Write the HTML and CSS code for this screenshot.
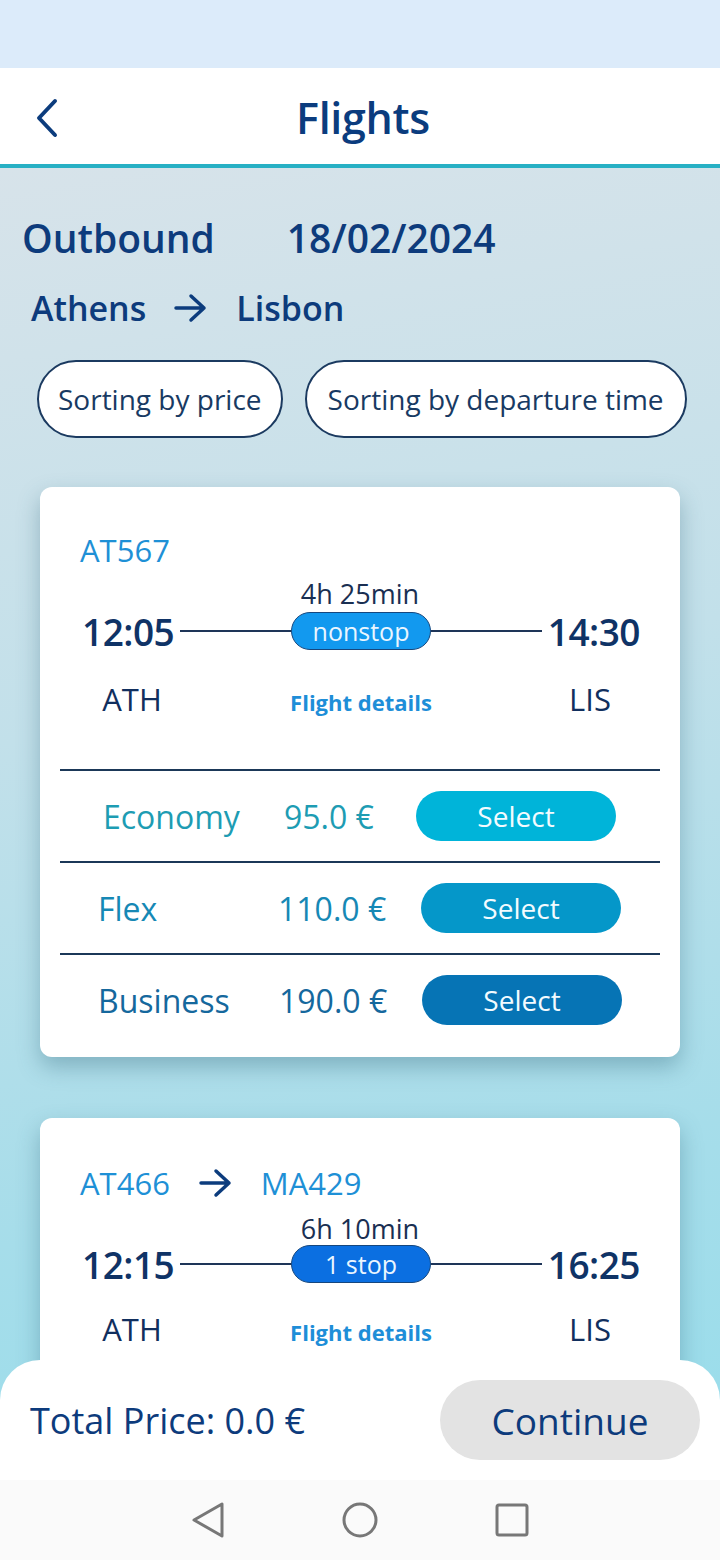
FILE: index.html
```html
<!DOCTYPE html>
<html lang="en">
<head>
<meta charset="utf-8">
<title>Flights</title>
<link rel="stylesheet" href="styles.css">
</head>
<body>
<div class="phone">
  <div class="status"></div>
  <header class="header">
    <svg class="back" width="24" height="40" viewBox="0 0 24 40"><path d="M20 3 L4 20 L20 37" fill="none" stroke="#0C3C7D" stroke-width="4" stroke-linecap="round" stroke-linejoin="round"/></svg>
    <h1 class="title">Flights</h1>
  </header>
  <main class="main">
    <div class="content">
      <div class="trip-row">
        <span class="trip-label">Outbound</span>
        <span class="trip-date">18/02/2024</span>
      </div>
      <div class="route-row">
        <span>Athens</span>
        <svg class="arrow" width="34" height="30" viewBox="0 0 34 30"><path d="M2 15 H30 M17 3 L30 15 L17 27" fill="none" stroke="#0C3C7D" stroke-width="3.5" stroke-linecap="round" stroke-linejoin="round"/></svg>
        <span>Lisbon</span>
      </div>
      <div class="sort-row">
        <button class="sort-btn">Sorting by price</button>
        <button class="sort-btn">Sorting by departure time</button>
      </div>

      <section class="card">
        <div class="code-row"><span class="code">AT567</span></div>
        <div class="duration">4h 25min</div>
        <div class="time-row">
          <span class="time">12:05</span>
          <span class="line"></span>
          <span class="badge nonstop">nonstop</span>
          <span class="line"></span>
          <span class="time">14:30</span>
        </div>
        <div class="airport-row">
          <span class="airport">ATH</span>
          <span class="details">Flight details</span>
          <span class="airport">LIS</span>
        </div>
        <div class="fares">
          <div class="fare eco">
            <span class="fare-name">Economy</span>
            <span class="fare-price">95.0 €</span>
            <button class="select">Select</button>
          </div>
          <div class="fare flex">
            <span class="fare-name">Flex</span>
            <span class="fare-price">110.0 €</span>
            <button class="select">Select</button>
          </div>
          <div class="fare biz">
            <span class="fare-name">Business</span>
            <span class="fare-price">190.0 €</span>
            <button class="select">Select</button>
          </div>
        </div>
      </section>

      <section class="card card2">
        <div class="code-row codes2">
          <span class="code">AT466</span>
          <svg class="arrow small" width="34" height="30" viewBox="0 0 34 30"><path d="M2 15 H30 M17 3 L30 15 L17 27" fill="none" stroke="#0C3C7D" stroke-width="3.5" stroke-linecap="round" stroke-linejoin="round"/></svg>
          <span class="code">MA429</span>
        </div>
        <div class="duration">6h 10min</div>
        <div class="time-row">
          <span class="time">12:15</span>
          <span class="line"></span>
          <span class="badge stop">1 stop</span>
          <span class="line"></span>
          <span class="time">16:25</span>
        </div>
        <div class="airport-row">
          <span class="airport">ATH</span>
          <span class="details">Flight details</span>
          <span class="airport">LIS</span>
        </div>
      </section>
    </div>

    <div class="sheet">
      <span class="total">Total Price: 0.0 €</span>
      <button class="continue">Continue</button>
    </div>
  </main>
  <nav class="navbar">
    <svg width="40" height="40" viewBox="0 0 40 40"><path d="M34 4 L34 36 L6 20 Z" fill="none" stroke="#777" stroke-width="3" stroke-linejoin="round"/></svg>
    <svg width="40" height="40" viewBox="0 0 40 40"><circle cx="20" cy="20" r="16" fill="none" stroke="#777" stroke-width="3"/></svg>
    <svg width="40" height="40" viewBox="0 0 40 40"><rect x="5" y="5" width="30" height="30" rx="2" fill="none" stroke="#777" stroke-width="3"/></svg>
  </nav>
</div>
</body>
</html>
```
FILE: styles.css
```css
* { box-sizing: border-box; }
html, body { margin: 0; padding: 0; }
body {
  font-family: "Open Sans", "Noto Sans", sans-serif;
  color: #0D3B7C;
}
button { font-family: inherit; cursor: pointer; }

.phone {
  width: 720px;
  height: 1560px;
  display: flex;
  flex-direction: column;
  overflow: hidden;
}

.status {
  height: 68px;
  flex: none;
  background: #DCEBFA;
}

.header {
  height: 100px;
  flex: none;
  background: #fff;
  border-bottom: 4px solid #27B0C4;
  display: flex;
  align-items: center;
  justify-content: center;
  position: relative;
}
.back {
  position: absolute;
  left: 35px;
  top: 30px;
}
.title {
  margin: 0;
  font-size: 43px;
  font-weight: 600;
  color: #0B3C7E;
  letter-spacing: -0.3px;
  padding-top: 2px;
  margin-left: 6px;
}

.main {
  flex: 1;
  position: relative;
  overflow: hidden;
  background: linear-gradient(170deg, #D7E3EA 0%, #C2E0EA 40%, #A6DDEA 75%, #98DDEB 100%);
}

.content {
  padding-top: 42px;
}

.trip-row {
  height: 54px;
  display: flex;
  align-items: center;
  padding-left: 22px;
  font-size: 39px;
  font-weight: 600;
  color: #0D3B7C;
}
.trip-date { margin-left: 72px; }

.route-row {
  margin-top: 20px;
  height: 48px;
  display: flex;
  align-items: center;
  padding-left: 31px;
  font-size: 34px;
  font-weight: 600;
  color: #0D3B7C;
}
.route-row .arrow { margin: 0 28px 0 28px; }

.sort-row {
  margin-top: 28px;
  display: flex;
  gap: 22px;
  padding-left: 37px;
}
.sort-btn {
  height: 78px;
  padding: 0 19px;
  border: 2px solid #1B3A60;
  border-radius: 40px;
  background: #fff;
  font-size: 28px;
  color: #183A63;
}
.sort-btn + .sort-btn { padding: 0 21px; }

.card {
  margin: 49px 40px 0;
  background: #fff;
  border-radius: 12px;
  box-shadow: 0 10px 22px rgba(40, 95, 115, 0.35);
  padding-top: 43px;
}
.card2 { margin-top: 61px; padding-top: 45px; min-height: 400px; }

.code-row {
  height: 40px;
  display: flex;
  align-items: center;
  padding-left: 40px;
}
.code {
  font-size: 31px;
  color: #1E90D6;
}
.codes2 .arrow { margin: 0 28px 0 29px; }

.duration {
  margin-top: 9px;
  height: 30px;
  line-height: 30px;
  text-align: center;
  font-size: 27px;
  color: #1A2F52;
}
.card2 .duration { margin-top: 11px; }
.card2 .time-row { margin-top: -2px; }
.card2 .airport-row { margin-top: 22px; }

.time-row {
  height: 44px;
  display: flex;
  align-items: center;
  padding: 0 40px 0 42px;
}
.time {
  font-size: 37px;
  font-weight: 600;
  color: #0F3366;
  letter-spacing: -0.5px;
}
.line {
  flex: 1;
  height: 1.5px;
  background: #1E3558;
  margin: 0 6px;
}
.badge {
  width: 140px;
  height: 38px;
  border-radius: 20px;
  border: 1.5px solid #16477E;
  color: #EAF6FF;
  font-size: 25px;
  display: flex;
  align-items: center;
  justify-content: center;
  margin: 0 -6px;
  position: relative;
  z-index: 1;
}
.nonstop { background: #1299EF; }
.stop { background: #0B6FE1; }

.airport-row {
  margin-top: 25px;
  height: 40px;
  display: grid;
  grid-template-columns: 100px 1fr 100px;
  align-items: center;
  padding: 0 40px 0 42px;
}
.airport {
  text-align: center;
  font-size: 31px;
  color: #112F5E;
}
.details {
  text-align: center;
  font-size: 22px;
  font-weight: 700;
  color: #1E8ED8;
  padding-top: 5px;
}

.fares {
  margin: 51px 20px 0;
  padding-bottom: 12px;
}
.fare {
  height: 92px;
  border-top: 2px solid #1B3858;
  display: grid;
  align-items: center;
  font-size: 32px;
}
.select {
  height: 50px;
  border: none;
  border-radius: 25px;
  color: #F3FBFF;
  font-size: 28px;
}
.eco { color: #1D9CB3; grid-template-columns: 181px 132px 200px; padding-left: 43px; }
.eco .select { background: #00B4D9; }
.flex { color: #1688B5; grid-template-columns: 180px 143px 200px; padding-left: 38px; }
.flex .select { background: #0597C9; }
.biz { color: #15689D; grid-template-columns: 181px 143px 200px; padding-left: 38px; }
.biz .select { background: #0674B5; }

.sheet {
  position: absolute;
  left: 0;
  right: 0;
  bottom: 0;
  height: 120px;
  background: #fff;
  border-radius: 40px 40px 0 0;
  display: flex;
  align-items: center;
  justify-content: space-between;
  padding: 0 20px 0 30px;
}
.total {
  font-size: 36px;
  color: #0D3B7C;
}
.continue {
  width: 260px;
  height: 80px;
  border: none;
  border-radius: 40px;
  background: #E3E3E3;
  font-size: 37px;
  color: #0D3B7C;
}

.navbar {
  height: 80px;
  flex: none;
  background: #FAFAFA;
  display: flex;
  align-items: center;
  justify-content: center;
  gap: 112px;
}
```
